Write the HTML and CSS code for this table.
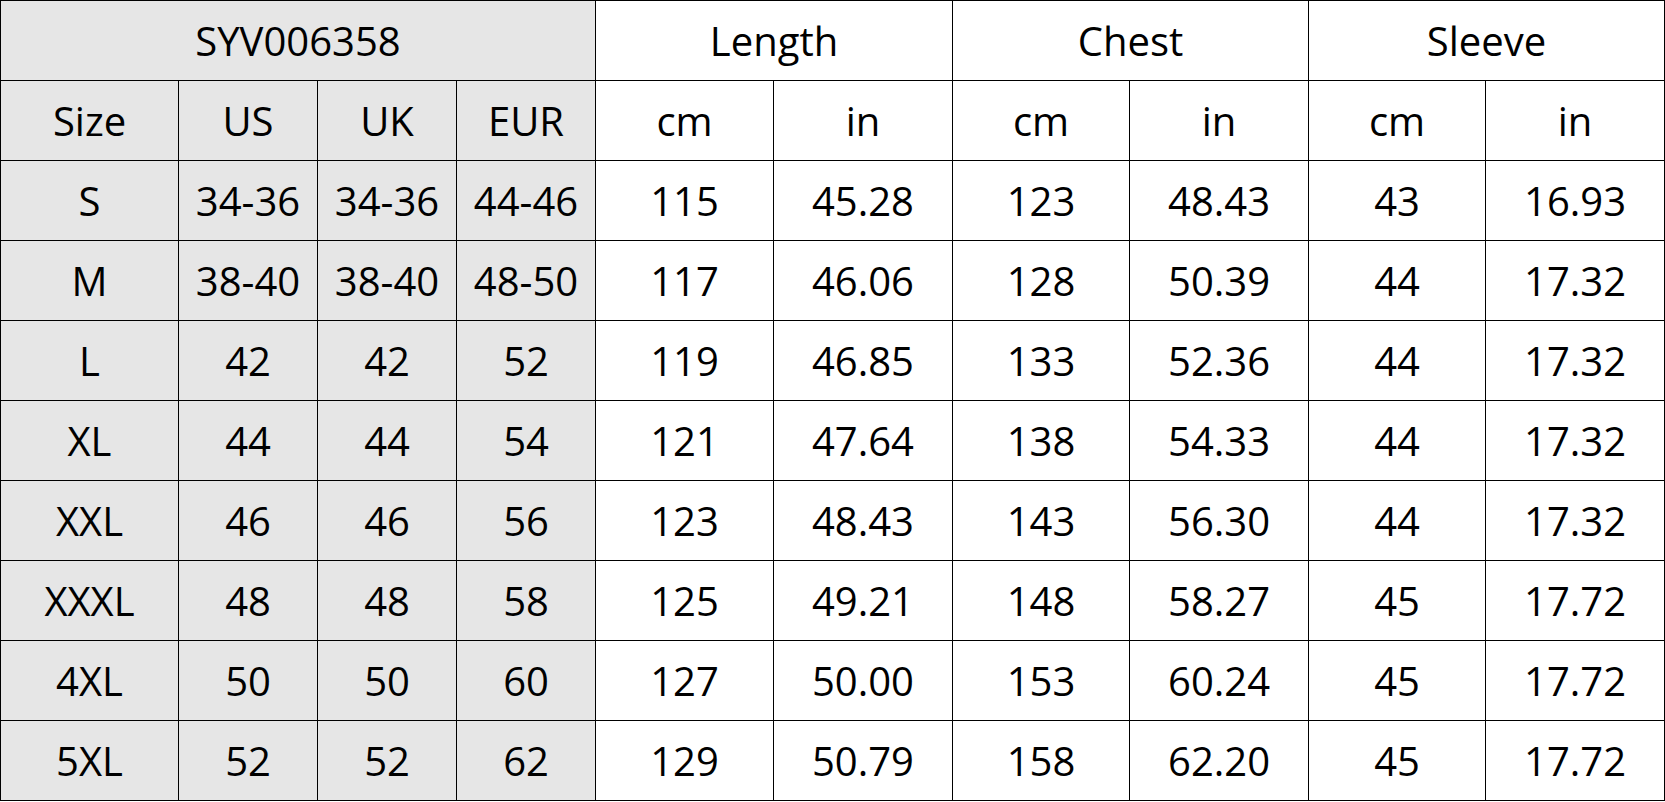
FILE: index.html
```html
<!DOCTYPE html>
<html>
<head>
<meta charset="utf-8">
<link rel="stylesheet" href="styles.css">
</head>
<body>
<table class="size-table">
  <colgroup>
    <col class="c-size"><col class="c-reg"><col class="c-reg"><col class="c-reg">
    <col class="c-a"><col class="c-b"><col class="c-c"><col class="c-b"><col class="c-c"><col class="c-b">
  </colgroup>
  <tr>
    <td class="gray" colspan="4">SYV006358</td>
    <td colspan="2">Length</td>
    <td colspan="2">Chest</td>
    <td colspan="2">Sleeve</td>
  </tr>
  <tr>
    <td class="gray">Size</td><td class="gray">US</td><td class="gray">UK</td><td class="gray">EUR</td>
    <td>cm</td><td>in</td><td>cm</td><td>in</td><td>cm</td><td>in</td>
  </tr>
  <tr>
    <td class="gray">S</td><td class="gray">34-36</td><td class="gray">34-36</td><td class="gray">44-46</td>
    <td>115</td><td>45.28</td><td>123</td><td>48.43</td><td>43</td><td>16.93</td>
  </tr>
  <tr>
    <td class="gray">M</td><td class="gray">38-40</td><td class="gray">38-40</td><td class="gray">48-50</td>
    <td>117</td><td>46.06</td><td>128</td><td>50.39</td><td>44</td><td>17.32</td>
  </tr>
  <tr>
    <td class="gray">L</td><td class="gray">42</td><td class="gray">42</td><td class="gray">52</td>
    <td>119</td><td>46.85</td><td>133</td><td>52.36</td><td>44</td><td>17.32</td>
  </tr>
  <tr>
    <td class="gray">XL</td><td class="gray">44</td><td class="gray">44</td><td class="gray">54</td>
    <td>121</td><td>47.64</td><td>138</td><td>54.33</td><td>44</td><td>17.32</td>
  </tr>
  <tr>
    <td class="gray">XXL</td><td class="gray">46</td><td class="gray">46</td><td class="gray">56</td>
    <td>123</td><td>48.43</td><td>143</td><td>56.30</td><td>44</td><td>17.32</td>
  </tr>
  <tr>
    <td class="gray">XXXL</td><td class="gray">48</td><td class="gray">48</td><td class="gray">58</td>
    <td>125</td><td>49.21</td><td>148</td><td>58.27</td><td>45</td><td>17.72</td>
  </tr>
  <tr>
    <td class="gray">4XL</td><td class="gray">50</td><td class="gray">50</td><td class="gray">60</td>
    <td>127</td><td>50.00</td><td>153</td><td>60.24</td><td>45</td><td>17.72</td>
  </tr>
  <tr>
    <td class="gray">5XL</td><td class="gray">52</td><td class="gray">52</td><td class="gray">62</td>
    <td>129</td><td>50.79</td><td>158</td><td>62.20</td><td>45</td><td>17.72</td>
  </tr>
</table>
</body>
</html>
```
FILE: styles.css
```css
html, body {
  margin: 0;
  padding: 0;
  background: #ffffff;
}
.size-table {
  width: 1665px;
  table-layout: fixed;
  border-collapse: collapse;
  font-family: "Open Sans", "Noto Sans", sans-serif;
  font-size: 40px;
  color: #000;
}
.c-size { width: 178px; }
.c-reg { width: 139px; }
.c-a { width: 178px; }
.c-b { width: 179px; }
.c-c { width: 177px; }
.size-table td {
  border: 1px solid #000;
  height: 79px;
  padding: 0;
  box-sizing: border-box;
  text-align: center;
  vertical-align: middle;
  white-space: nowrap;
  line-height: 1;
}
.size-table tr {
  height: 80px;
}
.gray {
  background: #e6e6e6;
}
```
